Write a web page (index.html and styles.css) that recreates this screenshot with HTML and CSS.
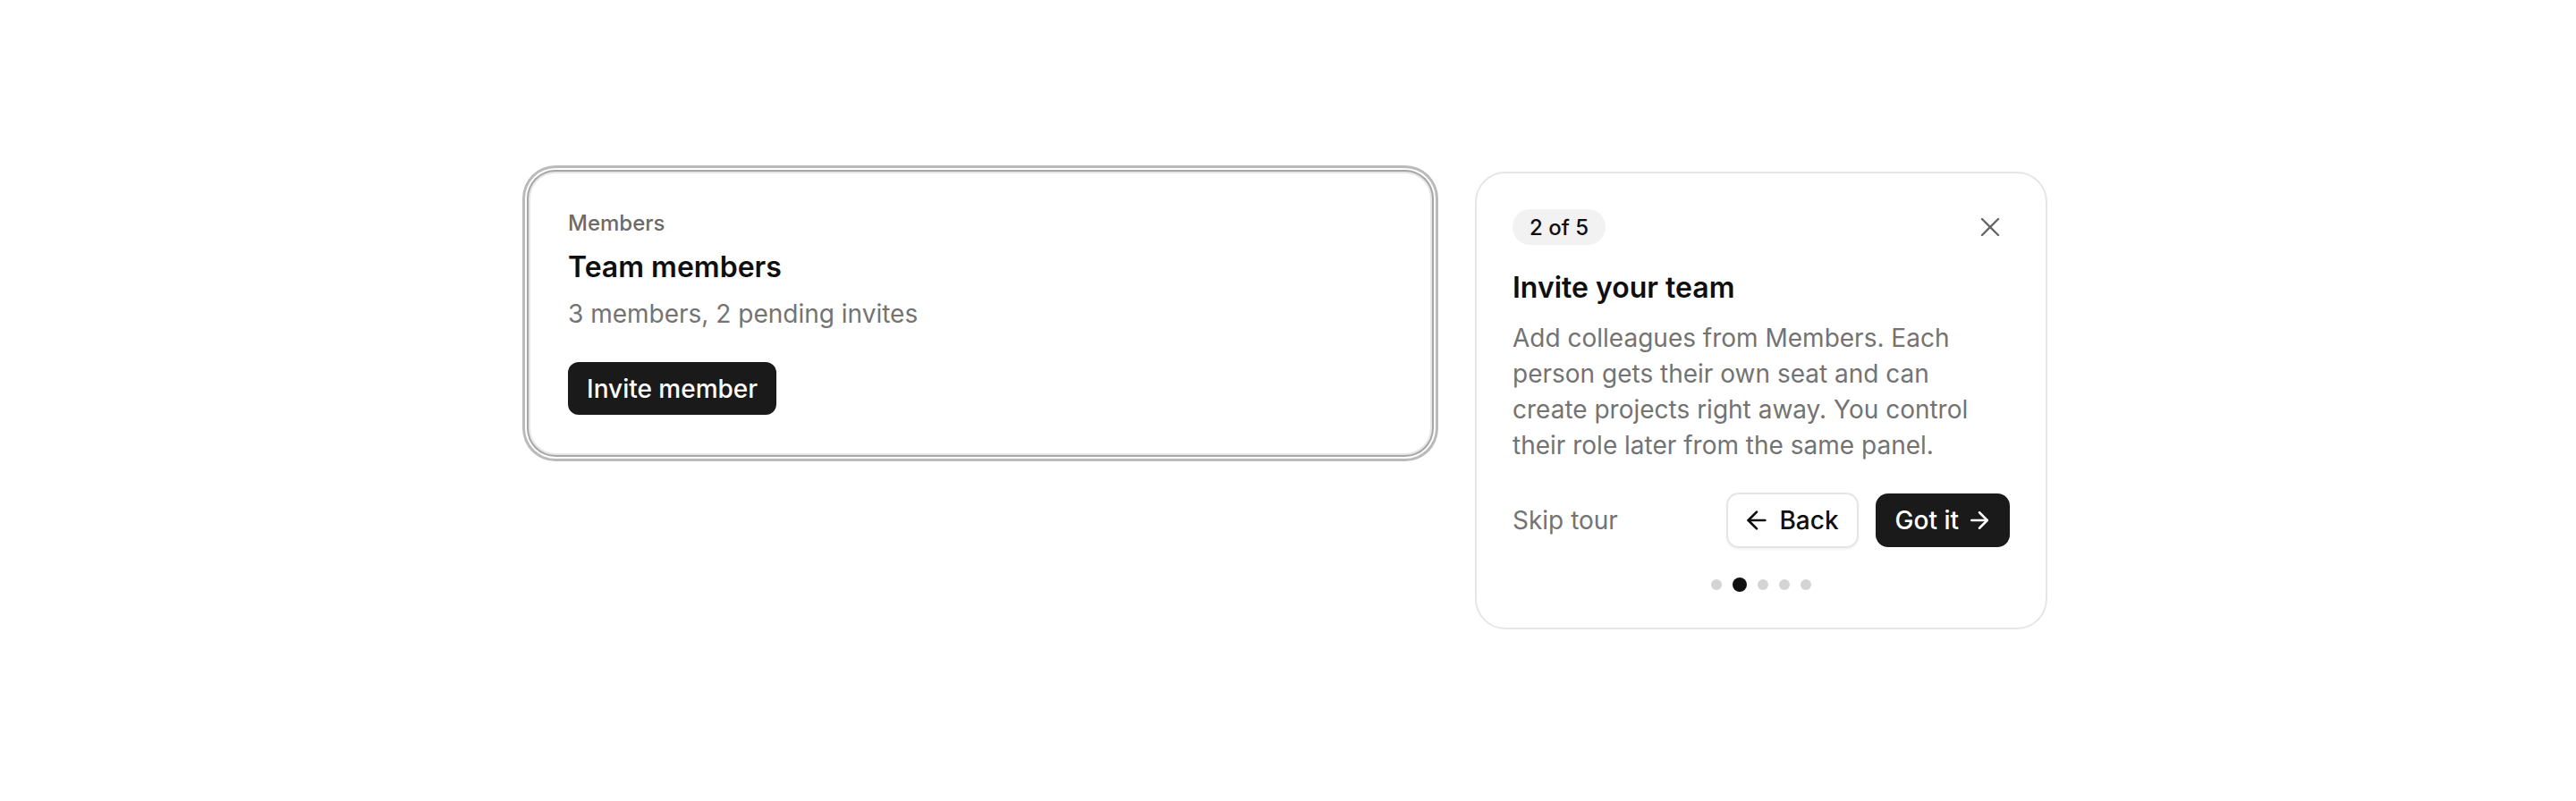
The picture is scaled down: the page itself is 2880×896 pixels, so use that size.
FILE: index.html
```html
<!DOCTYPE html>
<html lang="en">
<head>
<meta charset="utf-8">
<title>Tour</title>
<link rel="stylesheet" href="styles.css">
</head>
<body>
<main class="stage">
  <section class="card card-highlight">
    <div class="eyebrow">Members</div>
    <h2 class="card-title">Team members</h2>
    <p class="card-sub">3 members, 2 pending invites</p>
    <button class="btn btn-dark btn-invite">Invite member</button>
  </section>

  <section class="tour">
    <div class="tour-head">
      <span class="pill">2 of 5</span>
      <button class="close" aria-label="Close">
        <svg viewBox="0 0 24 24" width="36" height="36" fill="none" stroke="currentColor" stroke-width="1.6" stroke-linecap="round" stroke-linejoin="round"><path d="M18 6 6 18"/><path d="m6 6 12 12"/></svg>
      </button>
    </div>
    <h2 class="tour-title">Invite your team</h2>
    <p class="tour-text">Add colleagues from Members. Each person gets their own seat and can create projects right away. You control their role later from the same panel.</p>
    <div class="tour-foot">
      <button class="skip">Skip tour</button>
      <div class="tour-actions">
        <button class="btn btn-light">
          <svg viewBox="0 0 24 24" width="32" height="32" fill="none" stroke="currentColor" stroke-width="2" stroke-linecap="round" stroke-linejoin="round"><path d="m12 19-7-7 7-7"/><path d="M19 12H5"/></svg>
          <span>Back</span>
        </button>
        <button class="btn btn-dark btn-next">
          <span>Got it</span>
          <svg viewBox="0 0 24 24" width="30" height="30" fill="none" stroke="currentColor" stroke-width="2" stroke-linecap="round" stroke-linejoin="round"><path d="M5 12h14"/><path d="m12 5 7 7-7 7"/></svg>
        </button>
      </div>
    </div>
    <div class="dots">
      <span class="dot"></span>
      <span class="dot dot-active"></span>
      <span class="dot"></span>
      <span class="dot"></span>
      <span class="dot"></span>
    </div>
  </section>
</main>
</body>
</html>
```

FILE: styles.css
```css
* { box-sizing: border-box; }

html, body {
  margin: 0;
  padding: 0;
  background: #ffffff;
}

body {
  font-family: "Inter", "Noto Sans", sans-serif;
  color: #0f0f0f;
  -webkit-font-smoothing: antialiased;
}

.stage {
  height: 896px;
  display: flex;
  justify-content: center;
  align-items: flex-start;
  gap: 48px;
  padding-top: 192px;
}

.card {
  width: 1010px;
  background: #fff;
  border: 2px solid #e6e6e6;
  border-radius: 30px;
  padding: 40px 44px 43px 42px;
}

.card-highlight {
  box-shadow: 0 0 0 2px #a6a6a6, 0 0 0 4px #ffffff, 0 0 0 7px #bababa;
}

.eyebrow {
  font-size: 24px;
  line-height: 32px;
  font-weight: 500;
  color: #6b6b6b;
}

.card-title {
  margin: 13px 0 0;
  font-size: 32px;
  line-height: 40px;
  font-weight: 600;
  color: #0f0f0f;
}

.card-sub {
  margin: 14px 0 0;
  font-size: 28px;
  line-height: 36px;
  color: #737373;
}

.btn {
  font-family: inherit;
  display: inline-flex;
  align-items: center;
  font-size: 28px;
  font-weight: 500;
  border-radius: 14px;
  cursor: pointer;
}

.btn-dark {
  background: #1a1a1a;
  color: #fff;
  border: none;
  height: 60px;
}

.btn-invite {
  margin-top: 36px;
  height: 59px;
  padding: 0 21px;
  border-radius: 12px;
}

.btn-next {
  gap: 8px;
  padding: 0 19px 0 22px;
}

.btn-light {
  background: #fff;
  color: #0f0f0f;
  border: 2px solid #e5e5e5;
  height: 62px;
  gap: 9px;
  padding: 0 20px 0 16px;
  box-shadow: 0 2px 3px rgba(0, 0, 0, 0.05);
}

.tour {
  width: 640px;
  background: #fff;
  border: 2px solid #e6e6e6;
  border-radius: 34px;
  padding: 40px;
}

.tour-head {
  display: flex;
  justify-content: space-between;
  align-items: center;
  height: 40px;
}

.pill {
  display: inline-flex;
  align-items: center;
  height: 40px;
  padding: 0 19px;
  border-radius: 20px;
  background: #f2f2f2;
  font-size: 24px;
  font-weight: 500;
  color: #0f0f0f;
}

.close {
  width: 44px;
  height: 40px;
  border: none;
  background: none;
  padding: 0;
  display: flex;
  align-items: center;
  justify-content: center;
  color: #666;
  cursor: pointer;
}

.tour-title {
  margin: 28px 0 0;
  font-size: 32px;
  line-height: 40px;
  font-weight: 600;
  color: #0f0f0f;
}

.tour-text {
  margin: 16px 0 0;
  font-size: 28px;
  line-height: 40px;
  color: #737373;
}

.tour-foot {
  margin-top: 33px;
  display: flex;
  justify-content: space-between;
  align-items: center;
  height: 62px;
}

.skip {
  font-family: inherit;
  border: none;
  background: none;
  padding: 0;
  font-size: 28px;
  color: #737373;
  cursor: pointer;
}

.tour-actions {
  display: flex;
  align-items: center;
  gap: 19px;
}

.dots {
  margin-top: 33px;
  display: flex;
  justify-content: center;
  align-items: center;
  gap: 12px;
  height: 16px;
}

.dot {
  width: 12px;
  height: 12px;
  border-radius: 50%;
  background: #d4d4d4;
}

.dot-active {
  width: 16px;
  height: 16px;
  background: #111;
}
```
